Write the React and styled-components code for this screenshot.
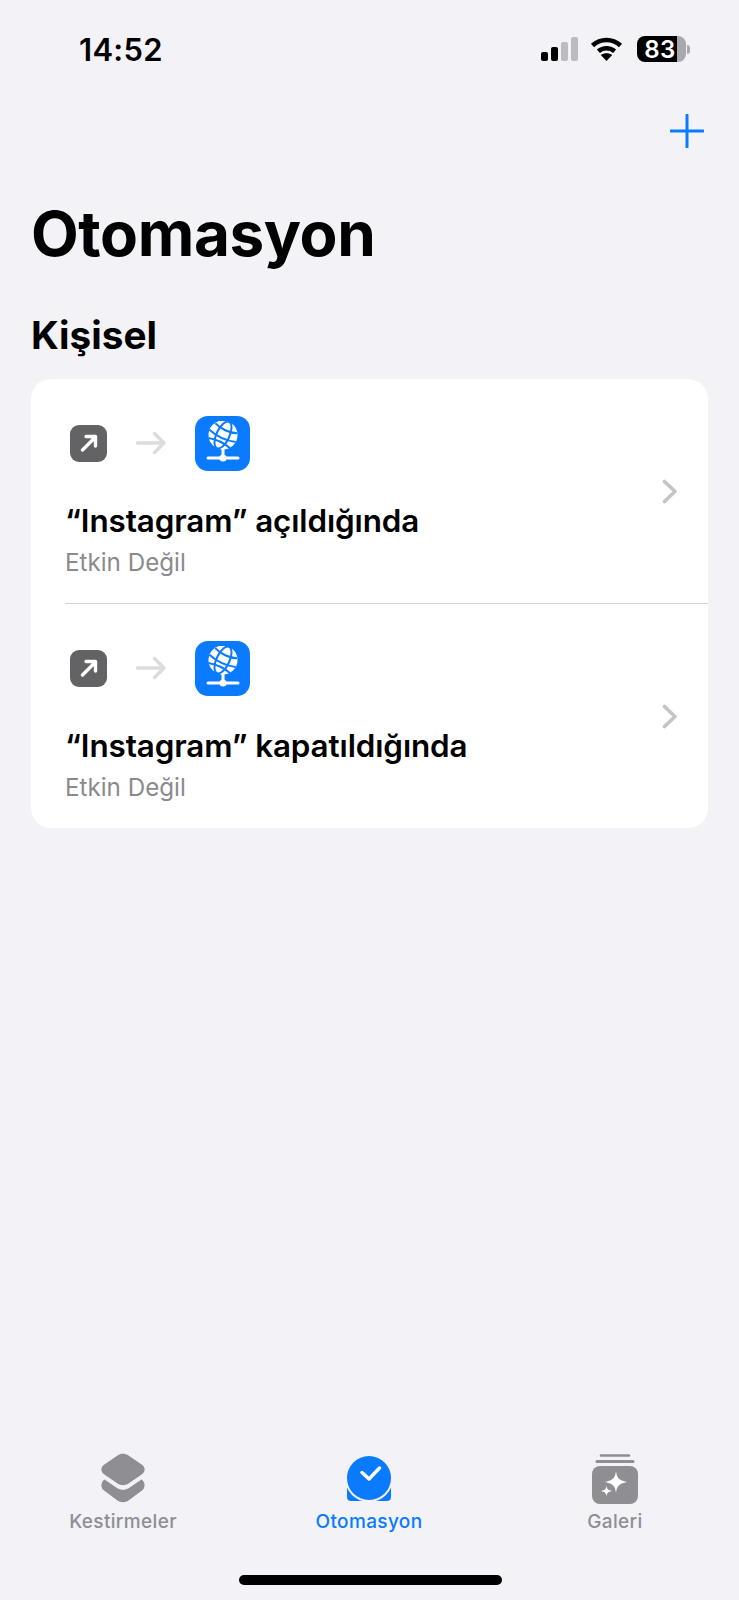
import React from 'react';
import styled, { createGlobalStyle } from 'styled-components';

const GlobalStyle = createGlobalStyle`
  html, body {
    margin: 0;
    padding: 0;
    background: #f2f2f7;
  }
  * {
    box-sizing: border-box;
  }
`;

const Screen = styled.div`
  position: relative;
  display: flex;
  flex-direction: column;
  width: 739px;
  height: 1600px;
  overflow: hidden;
  background: #f2f2f7;
  color: #000;
  font-family: Inter, "Liberation Sans", sans-serif;
`;

const StatusBar = styled.div`
  display: flex;
  align-items: center;
  justify-content: space-between;
  height: 60px;
  margin-top: 19px;
  padding: 0 49px 0 79px;
`;

const Clock = styled.span`
  font-size: 31px;
  font-weight: 600;
  letter-spacing: 0.3px;
`;

const StatusIcons = styled.div`
  display: flex;
  align-items: center;
  gap: 12px;
`;

const Battery = styled.div`
  display: flex;
  align-items: center;
  justify-content: center;
  width: 49px;
  height: 26px;
  padding-right: 3px;
  border-radius: 8px;
  overflow: hidden;
  background: linear-gradient(90deg, #000 0 82%, #a9a9ad 82%);
  color: #fff;
  font-size: 24px;
  font-weight: 600;
  letter-spacing: 0.4px;
`;

const BatteryWrap = styled.div`
  display: flex;
  align-items: center;
  gap: 1px;
  margin-left: 2px;
`;

const BatteryCap = styled.div`
  width: 3px;
  height: 9px;
  border-radius: 0 3px 3px 0;
  background: #a9a9ad;
`;

const NavBar = styled.div`
  display: flex;
  justify-content: flex-end;
  padding: 35px 35px 0 0;
  height: 69px;
`;

const Title = styled.h1`
  margin: 48px 0 0;
  padding-left: 31px;
  font-size: 62px;
  line-height: 76px;
  font-weight: 700;
  letter-spacing: -0.4px;
`;

const SectionTitle = styled.h2`
  margin: 38px 0 0;
  padding-left: 31px;
  font-size: 38.7px;
  line-height: 50px;
  font-weight: 700;
`;

const Card = styled.div`
  margin: 19px 31px 0;
  border-radius: 20px;
  background: #fff;
  overflow: hidden;
`;

const Row = styled.div`
  display: flex;
  align-items: center;
  justify-content: space-between;
  height: ${({ $last }) => ($last ? '224px' : '225px')};
  margin-left: 34px;
  padding: 0 30px 0 0;
  border-bottom: ${({ $last }) => ($last ? 'none' : '1px solid #d3d3d6')};
`;

const RowBody = styled.div`
  display: flex;
  flex-direction: column;
  align-self: stretch;
  padding-top: 37px;
`;

const IconLine = styled.div`
  display: flex;
  align-items: center;
  height: 54px;
  padding-left: 5px;
`;

const GrayIcon = styled.div`
  display: flex;
  align-items: center;
  justify-content: center;
  width: 37px;
  height: 37px;
  border-radius: 9px;
  background: #636366;
`;

const FlowArrow = styled.svg`
  margin: 0 29px 0 29px;
`;

const BlueIcon = styled.div`
  display: flex;
  align-items: center;
  justify-content: center;
  width: 55px;
  height: 55px;
  border-radius: 13px;
  background: #0a7aff;
`;

const RowTitle = styled.div`
  margin-top: 29px;
  font-size: 31.4px;
  line-height: 44px;
  font-weight: 600;
  letter-spacing: -0.1px;
`;

const RowSubtitle = styled.div`
  margin-top: 4px;
  font-size: 24.2px;
  line-height: 32px;
  color: #8a8a8e;
`;

const TabBar = styled.div`
  display: grid;
  grid-template-columns: repeat(3, 246px);
  margin-top: auto;
  padding-bottom: 66px;
`;

const Tab = styled.div`
  display: flex;
  flex-direction: column;
  align-items: center;
  color: ${({ $active }) => ($active ? '#0a7aff' : '#8e8e93')};
  font-size: 19px;
  line-height: 24px;
  font-weight: 500;
  letter-spacing: 0.35px;
`;

const TabIcon = styled.div`
  display: flex;
  align-items: center;
  justify-content: center;
  height: 52px;
  margin-bottom: 5px;
`;

const HomeIndicator = styled.div`
  position: absolute;
  left: 239px;
  bottom: 15px;
  width: 263px;
  height: 10px;
  border-radius: 5px;
  background: #000;
`;

const SignalIcon = () => (
  <svg width="37" height="24" viewBox="0 0 37 24">
    <rect x="0" y="15" width="7" height="9" rx="2" fill="#000" />
    <rect x="10" y="10" width="7" height="14" rx="2" fill="#000" />
    <rect x="20" y="5" width="7" height="19" rx="2" fill="#bcbcc0" />
    <rect x="30" y="0" width="7" height="24" rx="2" fill="#bcbcc0" />
  </svg>
);

const WifiIcon = () => (
  <svg width="33" height="24" viewBox="0 0 33 24" fill="none">
    <path d="M2.5 8.5C10.5 1.2 22.5 1.2 30.5 8.5" stroke="#000" strokeWidth="4.6" />
    <path d="M8.4 14.2C13 10.2 20 10.2 24.6 14.2" stroke="#000" strokeWidth="4.6" />
    <path d="M16.5 24L10.8 18C14 15.6 19 15.6 22.2 18Z" fill="#000" />
  </svg>
);

const PlusIcon = () => (
  <svg width="34" height="34" viewBox="0 0 34 34" fill="none">
    <path d="M17 1V33M1 17H33" stroke="#0a7aff" strokeWidth="3" strokeLinecap="round" />
  </svg>
);

const OpenAppIcon = () => (
  <svg width="20" height="20" viewBox="0 0 20 20" fill="none">
    <path d="M3.5 17L16 4.5M7 3.5H16.5V13" stroke="#fff" strokeWidth="3.4" strokeLinecap="round" strokeLinejoin="round" />
  </svg>
);

const ArrowIcon = () => (
  <FlowArrow width="30" height="24" viewBox="0 0 30 24" fill="none">
    <path d="M1.5 12H28M18.5 2.5L28 12L18.5 21.5" stroke="#dcdcde" strokeWidth="3.4" strokeLinecap="round" strokeLinejoin="round" />
  </FlowArrow>
);

const GlobeIcon = () => (
  <svg width="40" height="44" viewBox="0 0 40 44" fill="none">
    <circle cx="20" cy="14" r="14.5" fill="#fff" />
    <g transform="rotate(25 20 14)" stroke="#0a7aff" strokeWidth="2">
      <ellipse cx="20" cy="14" rx="6.5" ry="14.5" />
      <path d="M8 6.5C15 9.5 25 9.5 32 6.5M5.5 15C15 18 25 18 34.5 15M8 23C15 21 25 21 32 23" />
    </g>
    <path d="M20 27V37" stroke="#fff" strokeWidth="3" />
    <path d="M5 37H35" stroke="#fff" strokeWidth="3" strokeLinecap="round" />
    <circle cx="20" cy="37" r="3.6" fill="#fff" />
  </svg>
);

const ChevronIcon = () => (
  <svg width="16" height="25" viewBox="0 0 16 25" fill="none">
    <path d="M2.5 2.5L13 12.5L2.5 22.5" stroke="#c4c4c7" strokeWidth="3.6" strokeLinecap="round" strokeLinejoin="round" />
  </svg>
);

const LayersIcon = () => (
  <svg width="46" height="52" viewBox="0 0 46 52" fill="none">
    <path d="M17.5 2.5C20.8 .3 25.2 .3 28.5 2.5L42 11.8C45.5 14.2 45.5 18.8 42 21.2L28.5 30.5C25.2 32.7 20.8 32.7 17.5 30.5L4 21.2C.5 18.8 .5 14.2 4 11.8Z" fill="#8e8e93" />
    <path d="M4.5 26.5L17 35C20.6 37.4 25.4 37.4 29 35L41.5 26.5C45.5 29 45.5 35 42 37.5L28.5 47.5C25.2 49.8 20.8 49.8 17.5 47.5L4 37.5C.5 35 .5 29 4.5 26.5Z" fill="#8e8e93" />
  </svg>
);

const AutomationIcon = () => (
  <svg width="46" height="46" viewBox="0 0 46 46" fill="none">
    <path d="M1 27V41C1 43.5 2.5 45 5 45H41C43.5 45 45 43.5 45 41V27Z" fill="#0a7aff" />
    <circle cx="23" cy="22" r="24" fill="#f2f2f7" />
    <circle cx="23" cy="22" r="22" fill="#0a7aff" />
    <path d="M16 16.5L23 23L33.5 12" stroke="#fff" strokeWidth="3.4" strokeLinecap="round" strokeLinejoin="round" />
  </svg>
);

const GalleryIcon = () => (
  <svg width="46" height="50" viewBox="0 0 46 50" fill="none">
    <path d="M9 1.5H37" stroke="#8e8e93" strokeWidth="2.6" strokeLinecap="round" />
    <path d="M5 7.5H41" stroke="#8e8e93" strokeWidth="3" strokeLinecap="round" />
    <rect x="0" y="12" width="46" height="38" rx="8" fill="#8e8e93" />
    <path d="M24 17C25 24 26.5 26 35 28C26.5 30 25 32 24 39C23 32 21.5 30 13 28C21.5 26 23 24 24 17Z" fill="#fff" />
    <path d="M14.5 31.5C15 35 15.8 36 20 37C15.8 38 15 39 14.5 42.5C14 39 13.2 38 9 37C13.2 36 14 35 14.5 31.5Z" fill="#fff" />
  </svg>
);

const automations = ['“Instagram” açıldığında', '“Instagram” kapatıldığında'];

const tabs = [
  { label: 'Kestirmeler', icon: <LayersIcon /> },
  { label: 'Otomasyon', icon: <AutomationIcon />, active: true },
  { label: 'Galeri', icon: <GalleryIcon /> },
];

export default function App() {
  return (
    <Screen>
      <GlobalStyle />
      <StatusBar>
        <Clock>14:52</Clock>
        <StatusIcons>
          <SignalIcon />
          <WifiIcon />
          <BatteryWrap>
            <Battery>83</Battery>
            <BatteryCap />
          </BatteryWrap>
        </StatusIcons>
      </StatusBar>
      <NavBar>
        <PlusIcon />
      </NavBar>
      <Title>Otomasyon</Title>
      <SectionTitle>Kişisel</SectionTitle>
      <Card>
        {automations.map((name, i) => (
          <Row key={name} $last={i === automations.length - 1}>
            <RowBody>
              <IconLine>
                <GrayIcon>
                  <OpenAppIcon />
                </GrayIcon>
                <ArrowIcon />
                <BlueIcon>
                  <GlobeIcon />
                </BlueIcon>
              </IconLine>
              <RowTitle>{name}</RowTitle>
              <RowSubtitle>Etkin Değil</RowSubtitle>
            </RowBody>
            <ChevronIcon />
          </Row>
        ))}
      </Card>
      <TabBar>
        {tabs.map((tab) => (
          <Tab key={tab.label} $active={tab.active}>
            <TabIcon>{tab.icon}</TabIcon>
            {tab.label}
          </Tab>
        ))}
      </TabBar>
      <HomeIndicator />
    </Screen>
  );
}
